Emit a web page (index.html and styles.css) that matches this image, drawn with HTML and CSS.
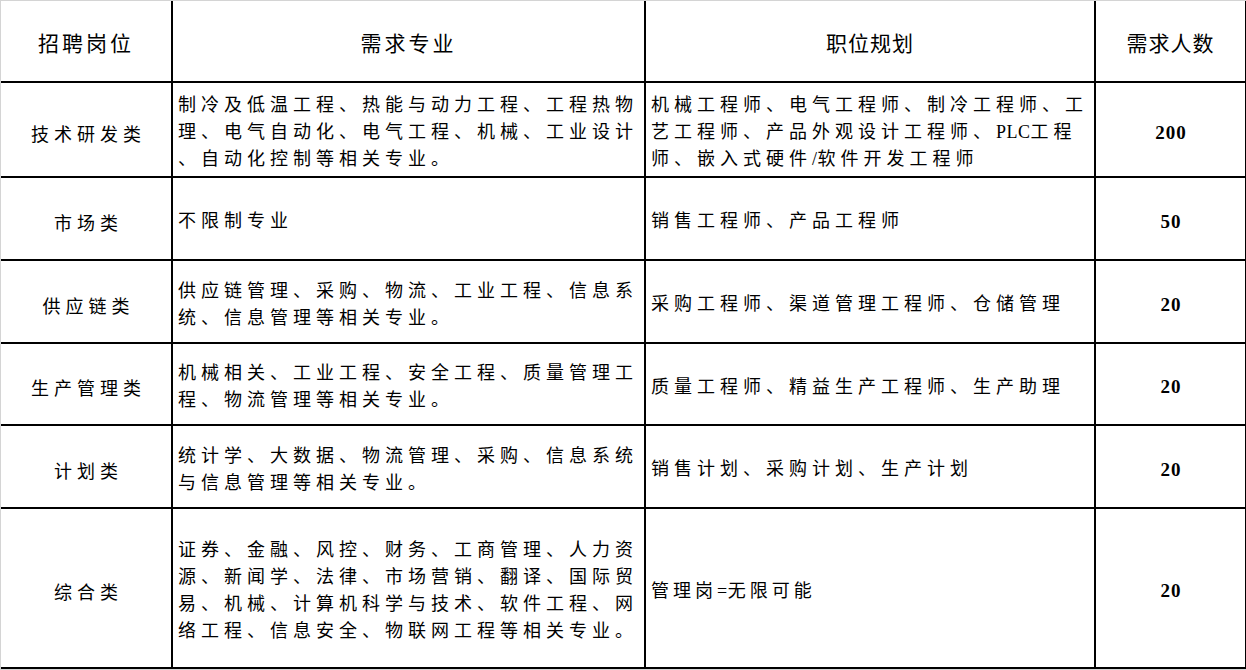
FILE: index.html
```html
<!DOCTYPE html>
<html lang="zh-CN">
<head>
<meta charset="utf-8">
<title>招聘岗位</title>
<link rel="stylesheet" href="styles.css">
</head>
<body>
<div class="sheet">
<table class="jobs">
  <colgroup>
    <col class="c1"><col class="c2"><col class="c3"><col class="c4">
  </colgroup>
  <thead>
    <tr class="r-head">
      <th>招聘岗位</th>
      <th>需求专业</th>
      <th class="tight">职位规划</th>
      <th class="tight">需求人数</th>
    </tr>
  </thead>
  <tbody>
    <tr class="r1">
      <td class="cat">技术研发类</td>
      <td class="txt">制冷及低温工程、热能与动力工程、工程热物<br>理、电气自动化、电气工程、机械、工业设计<br>、自动化控制等相关专业。</td>
      <td class="txt">机械工程师、电气工程师、制冷工程师、工<br>艺工程师、产品外观设计工程师、<span class="latin">PLC</span>工程<br>师、嵌入式硬件<span class="latin">/</span>软件开发工程师</td>
      <td class="num">200</td>
    </tr>
    <tr class="r2">
      <td class="cat">市场类</td>
      <td class="txt">不限制专业</td>
      <td class="txt">销售工程师、产品工程师</td>
      <td class="num">50</td>
    </tr>
    <tr class="r3">
      <td class="cat">供应链类</td>
      <td class="txt">供应链管理、采购、物流、工业工程、信息系<br>统、信息管理等相关专业。</td>
      <td class="txt">采购工程师、渠道管理工程师、仓储管理</td>
      <td class="num">20</td>
    </tr>
    <tr class="r4">
      <td class="cat">生产管理类</td>
      <td class="txt">机械相关、工业工程、安全工程、质量管理工<br>程、物流管理等相关专业。</td>
      <td class="txt">质量工程师、精益生产工程师、生产助理</td>
      <td class="num">20</td>
    </tr>
    <tr class="r5">
      <td class="cat">计划类</td>
      <td class="txt">统计学、大数据、物流管理、采购、信息系统<br>与信息管理等相关专业。</td>
      <td class="txt">销售计划、采购计划、生产计划</td>
      <td class="num">20</td>
    </tr>
    <tr class="r6">
      <td class="cat">综合类</td>
      <td class="txt">证券、金融、风控、财务、工商管理、人力资<br>源、新闻学、法律、市场营销、翻译、国际贸<br>易、机械、计算机科学与技术、软件工程、网<br>络工程、信息安全、物联网工程等相关专业。</td>
      <td class="txt tight">管理岗<span class="latin">=</span>无限可能</td>
      <td class="num">20</td>
    </tr>
  </tbody>
</table>
</div>
</body>
</html>
```

FILE: styles.css
```css
html, body {
  margin: 0;
  padding: 0;
}
body {
  background: #d4d4d4;
  width: 1246px;
  height: 670px;
  overflow: hidden;
}
.sheet {
  padding: 1px 0 0 1px;
  background: #d4d4d4;
}
.jobs {
  border-collapse: collapse;
  table-layout: fixed;
  width: 1245px;
  background: #ffffff;
  font-family: "Liberation Serif", "Noto Sans CJK SC", serif;
  color: #000;
}
.c1 { width: 171px; }
.c2 { width: 473px; }
.c3 { width: 450px; }
.c4 { width: 151px; }

.jobs th,
.jobs td {
  border: 2px solid #000;
  padding: 0;
  vertical-align: middle;
}
.jobs tr > :first-child { border-left: none; }
.jobs thead th { border-top: none; }

.jobs th {
  font-weight: 400;
  font-size: 21px;
  letter-spacing: 3px;
  text-align: center;
  padding-top: 2px;
}
.jobs th.tight { letter-spacing: 1px; }

.r-head { height: 81px; }
.r1 { height: 95px; }
.r2 { height: 83px; }
.r3 { height: 83px; }
.r4 { height: 82px; }
.r5 { height: 83px; }
.r6 { height: 160px; }

.cat {
  font-size: 18px;
  letter-spacing: 5px;
  text-align: center;
  padding: 6px 0 0 5px !important;
}
.txt {
  font-size: 18px;
  letter-spacing: 5px;
  line-height: 27px;
  text-align: left;
  padding: 6px 0 0 5px !important;
  white-space: nowrap;
}
.txt.tight { letter-spacing: 4px; }
.latin { letter-spacing: 0.5px; }
.num {
  font-size: 19px;
  font-weight: 700;
  letter-spacing: 1px;
  text-align: center;
  padding: 6px 0 0 1px !important;
}
```
